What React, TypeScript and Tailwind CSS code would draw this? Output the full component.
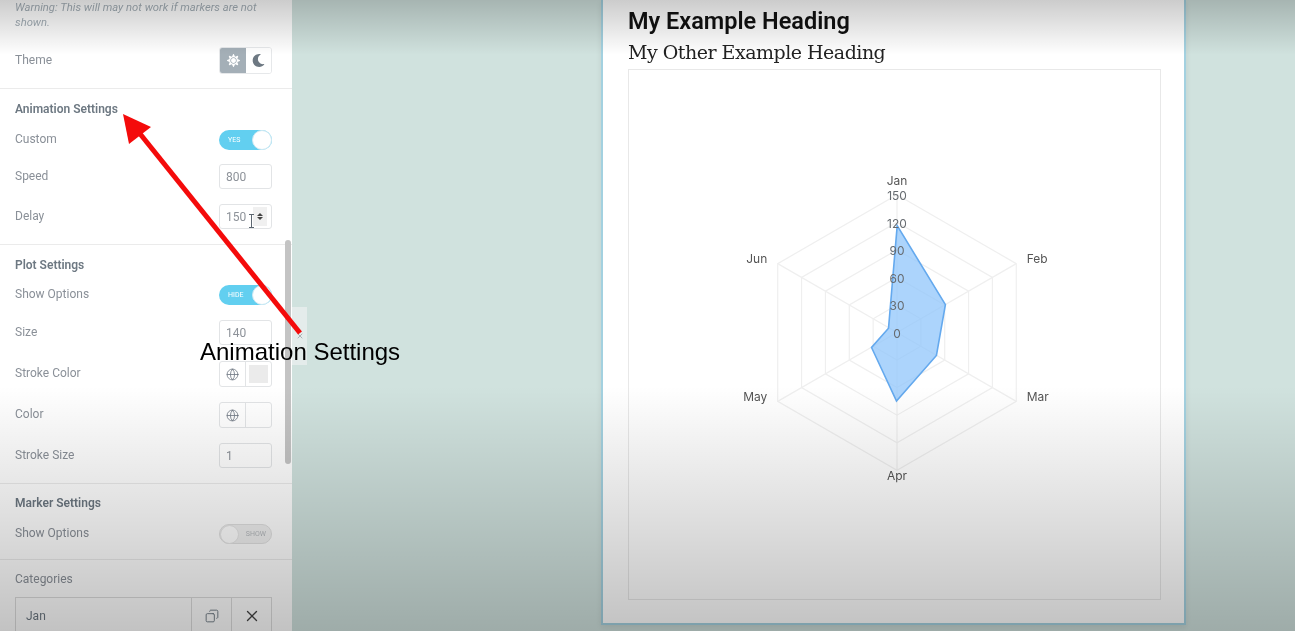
import React from "react";
import { Globe, Copy, X } from "lucide-react";
import { FaMoon, FaSun } from "react-icons/fa";

const Label = ({ children }: { children: React.ReactNode }) => (
  <span className="pb-[2px] text-[12px] text-[#8a9098]">{children}</span>
);

const Title = ({ children, className }: { children: React.ReactNode; className: string }) => (
  <div className={`flex h-[14px] items-center pt-[1px] text-[12px] font-semibold text-[#6d7882] ${className}`}>{children}</div>
);

const Row = ({ label, className, children }: { label: string; className: string; children: React.ReactNode }) => (
  <div className={`flex items-center justify-between ${className}`}>
    <Label>{label}</Label>
    {children}
  </div>
);

const NumberBox = ({ value, children }: { value: string; children?: React.ReactNode }) => (
  <div className="relative flex h-full w-[53px] items-center rounded-[3px] border border-[#e2e4e6] bg-white pl-[6px] text-[12px] text-[#8d9299]">
    {value}
    {children}
  </div>
);

const Toggle = ({ on, text }: { on: boolean; text: string }) =>
  on ? (
    <div className="flex h-[20px] w-[53px] items-center justify-between rounded-full bg-[#62cff0] pl-[9px]">
      <span className="text-[7px] text-white">{text}</span>
      <span className="h-[20px] w-[20px] rounded-full border border-[#cfe9f3] bg-white" />
    </div>
  ) : (
    <div className="flex h-[20px] w-[53px] items-center justify-between rounded-full border border-[#e0e0e0] bg-[#f0f0f0] pr-[5px]">
      <span className="h-[19px] w-[19px] rounded-full border border-[#e6e6e6] bg-white" />
      <span className="text-[7px] text-[#b4b8bc]">{text}</span>
    </div>
  );

const ColorBox = ({ swatch }: { swatch: boolean }) => (
  <div className="flex h-full w-[53px] rounded-[3px] border border-[#e2e4e6] bg-white">
    <div className="flex w-[26px] items-center justify-center border-r border-[#e2e4e6] text-[#6f7882]">
      <Globe size={13} strokeWidth={1.5} />
    </div>
    <div className="flex flex-1 items-center justify-center">
      {swatch && <span className="h-[18px] w-[19px] bg-[#ebebeb]" />}
    </div>
  </div>
);

const CX = 896.5;
const CY = 332;
const angles = [0, 1, 2, 3, 4, 5].map((i) => ((i * 60 - 90) * Math.PI) / 180);
const hex = (r: number) =>
  angles.map((a) => `${(CX + r * Math.cos(a)).toFixed(1)},${(CY + r * Math.sin(a)).toFixed(1)}`).join(" ");

const RadarChart = () => (
  <svg viewBox="628 69 532 530" className="h-full w-full" style={{ fontFamily: "Inter, sans-serif" }}>
    {[27.6, 55.2, 82.8, 110.4, 138].map((r) => (
      <polygon key={r} points={hex(r)} fill="none" stroke="#efefef" strokeWidth="1.2" />
    ))}
    {angles.map((a, i) => (
      <line key={i} x1={CX} y1={CY} x2={CX + 138 * Math.cos(a)} y2={CY + 138 * Math.sin(a)} stroke="#efefef" strokeWidth="1.2" />
    ))}
    <polygon
      points="896.7,225 945,304 936,355 896,400.7 871,347 888,327.7"
      fill="#90c5fb"
      fillOpacity="0.75"
      stroke="#64a9ee"
      strokeWidth="1.6"
    />
    <g fontSize="12" fill="#555" textAnchor="middle">
      <text x="896.5" y="184">Jan</text>
      <text x="1037" y="262.5">Feb</text>
      <text x="1037.5" y="401">Mar</text>
      <text x="896.5" y="480">Apr</text>
      <text x="754.5" y="401">May</text>
      <text x="756" y="262.5">Jun</text>
    </g>
    <g fontSize="12" fill="#666b70" textAnchor="middle">
      <text x="896.5" y="199.5">150</text>
      <text x="896.5" y="227">120</text>
      <text x="896.5" y="254.5">90</text>
      <text x="896.5" y="282">60</text>
      <text x="896.5" y="309.5">30</text>
      <text x="896.5" y="337.5">0</text>
    </g>
  </svg>
);

export default function App() {
  return (
    <div
      className="relative flex h-[631px] w-[1295px] overflow-hidden bg-[#d0e2de] blur-[0.5px]"
      style={{ fontFamily: "Roboto, sans-serif" }}
    >
      {/* Sidebar */}
      <aside className="relative h-full w-[292px] shrink-0 overflow-hidden bg-white">
        <section className="border-b border-[#ebebeb] pb-[14px] pl-[15px] pr-[20px]">
          <p className="text-[11.25px] italic leading-[15px] text-[#a4afb7]">
            Warning: This will may not work if markers are not shown.
          </p>
          <Row label="Theme" className="mt-[17px] h-[27px]">
            <div className="flex h-full w-[53px] overflow-hidden rounded-[3px] border border-[#e6e8ea]">
              <div className="flex w-[26px] items-center justify-center bg-[#a4afb7] text-white">
                <FaSun size={13} />
              </div>
              <div className="flex flex-1 items-center justify-center bg-white text-[#6d7882]">
                <FaMoon size={13} />
              </div>
            </div>
          </Row>
        </section>

        <section className="border-b border-[#ebebeb] pb-[15px] pl-[15px] pr-[20px]">
          <Title className="mt-[12px]">Animation Settings</Title>
          <Row label="Custom" className="mt-[15px] h-[20px]">
            <Toggle on text="YES" />
          </Row>
          <Row label="Speed" className="mt-[14px] h-[25px]">
            <NumberBox value="800" />
          </Row>
          <Row label="Delay" className="mt-[15px] h-[25px]">
            <NumberBox value="150">
              <span className="absolute right-[4px] top-[2px] flex h-[19px] w-[14px] flex-col items-center justify-center gap-[1px] bg-[#f0f0f0]">
                <span className="h-0 w-0 border-x-[3px] border-b-[3px] border-x-transparent border-b-[#444]" />
                <span className="h-0 w-0 border-x-[3px] border-t-[3px] border-x-transparent border-t-[#444]" />
              </span>
              <svg viewBox="0 0 7 14" className="absolute left-[28px] top-[9px] h-[14px] w-[7px]" fill="none" stroke="#5c6670" strokeWidth="1">
                <path d="M1 .5h5M1 13.5h5M3.5 .5v13" />
              </svg>
            </NumberBox>
          </Row>
        </section>

        <section className="border-b border-[#ebebeb] pb-[15px] pl-[15px] pr-[20px]">
          <Title className="mt-[12px]">Plot Settings</Title>
          <Row label="Show Options" className="mt-[14px] h-[20px]">
            <Toggle on text="HIDE" />
          </Row>
          <Row label="Size" className="mt-[15px] h-[25px]">
            <NumberBox value="140" />
          </Row>
          <Row label="Stroke Color" className="mt-[16px] h-[26px]">
            <ColorBox swatch />
          </Row>
          <Row label="Color" className="mt-[15px] h-[26px]">
            <ColorBox swatch={false} />
          </Row>
          <Row label="Stroke Size" className="mt-[15px] h-[25px]">
            <NumberBox value="1" />
          </Row>
        </section>

        <section className="border-b border-[#ebebeb] pb-[15px] pl-[15px] pr-[20px]">
          <Title className="mt-[11px]">Marker Settings</Title>
          <Row label="Show Options" className="mt-[15px] h-[20px]">
            <Toggle on={false} text="SHOW" />
          </Row>
        </section>

        <section className="pl-[15px] pr-[20px]">
          <div className="mt-[13px] flex h-[14px] items-center">
            <Label>Categories</Label>
          </div>
          <div className="mt-[10px] flex h-[44px] border border-[#dcdcdc] text-[12px] text-[#6d7882]">
            <div className="flex flex-1 items-center pb-[6px] pl-[10px]">Jan</div>
            <div className="flex w-[40px] items-center justify-center border-l border-[#dcdcdc] pb-[6px]">
              <Copy size={14} strokeWidth={1.6} className="-scale-x-100" />
            </div>
            <div className="flex w-[40px] items-center justify-center border-l border-[#dcdcdc] pb-[6px]">
              <X size={18} strokeWidth={1.8} className="text-[#444]" />
            </div>
          </div>
        </section>

        {/* Scrollbar */}
        <div className="absolute right-[1px] top-[240px] h-[224px] w-[6px] rounded-full bg-[#c4c4c4]" />
      </aside>

      {/* Collapse tab */}
      <div className="absolute left-[292px] top-[307px] flex h-[58px] w-[15px] items-center justify-center bg-[#e4eceb] text-[#8d9299]">
        <X size={8} />
      </div>

      {/* Canvas */}
      <main className="h-full flex-1 pl-[309px]">
        <div className="flex h-[625px] w-[585px] flex-col border-x-2 border-b-2 border-[#a3d1e0] bg-white pl-[25px] pr-[22px] shadow-[0_2px_6px_rgba(0,0,0,0.08)]">
          <h1 className="mt-[8px] text-[23.5px] font-semibold leading-[26px] text-[#111]">My Example Heading</h1>
          <h2
            className="mt-[3px] text-[19px] leading-[30px] tracking-[-0.5px] text-[#222]"
            style={{ fontFamily: "'DejaVu Serif', serif" }}
          >
            My Other Example Heading
          </h2>
          <div className="mt-[2px] h-[531px] w-[533px] border border-[#e8e8e8] bg-white">
            <RadarChart />
          </div>
        </div>
      </main>

      {/* Video vignette */}
      <div className="pointer-events-none absolute inset-x-0 top-0 h-[55px] bg-gradient-to-b from-[rgba(0,0,0,0.2)] to-transparent" />
      <div className="pointer-events-none absolute inset-x-0 bottom-0 h-[245px] bg-gradient-to-t from-[rgba(0,0,0,0.24)] to-transparent" />

      {/* Annotation */}
      <svg className="pointer-events-none absolute left-0 top-0 h-[631px] w-[1295px]" viewBox="0 0 1295 631">
        <line x1="300" y1="333" x2="137" y2="130" stroke="#f40b0b" strokeWidth="5" />
        <polygon points="123,114 151,127 129,144" fill="#f40b0b" />
      </svg>
      <span
        className="absolute left-[200px] top-[338px] text-[24px] leading-[28px] text-black"
        style={{ fontFamily: "'Liberation Sans', sans-serif" }}
      >
        Animation Settings
      </span>
    </div>
  );
}
